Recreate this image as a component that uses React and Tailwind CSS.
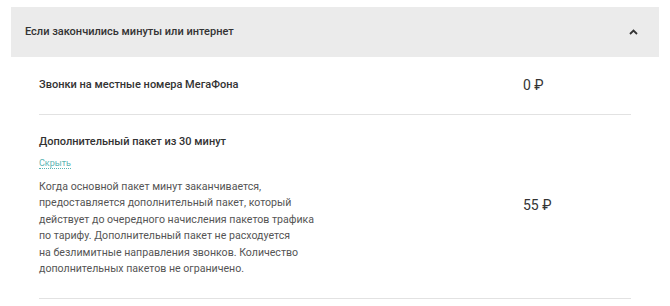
export default function App() {
  return (
    <div className="w-[670px] h-[306px] bg-white pt-[7px] px-[11px] font-['Roboto',sans-serif] text-[#333]">
      <div className="h-[50px] bg-[#ebebeb] flex items-center justify-between pl-[14px] pr-[21px]">
        <span className="text-[11px] font-medium text-[#333]">Если закончились минуты или интернет</span>
        <svg width="9" height="6" viewBox="0 0 9 6" fill="none">
          <path d="M1 5L4.5 1.5L8 5" stroke="#333" strokeWidth="1.8" />
        </svg>
      </div>
      <div className="px-[28px]">
        <div className="flex items-center h-[58px] border-b border-[#e2e2e2]">
          <span className="flex-1 text-[11px] font-medium">Звонки на местные номера МегаФона</span>
          <span className="w-[108px] text-[14px] font-normal">0 ₽</span>
        </div>
        <div className="flex items-center border-b border-[#e2e2e2] pt-[19px] pb-[21px]">
          <div className="flex-1">
            <div className="text-[11px] font-medium leading-[16px]">Дополнительный пакет из 30 минут</div>
            <div className="mt-[7px] text-[9px] leading-[12px] text-[#5bb5b3]">
              <span className="border-b border-dotted border-[#5bb5b3]">Скрыть</span>
            </div>
            <p className="mt-[10px] text-[10.6px] leading-[16.4px] text-[#555]">
              Когда основной пакет минут заканчивается,<br />
              предоставляется дополнительный пакет, который<br />
              действует до очередного начисления пакетов трафика<br />
              по тарифу. Дополнительный пакет не расходуется<br />
              на безлимитные направления звонков. Количество<br />
              дополнительных пакетов не ограничено.
            </p>
          </div>
          <span className="w-[108px] text-[14px] font-normal">55 ₽</span>
        </div>
      </div>
    </div>
  );
}
